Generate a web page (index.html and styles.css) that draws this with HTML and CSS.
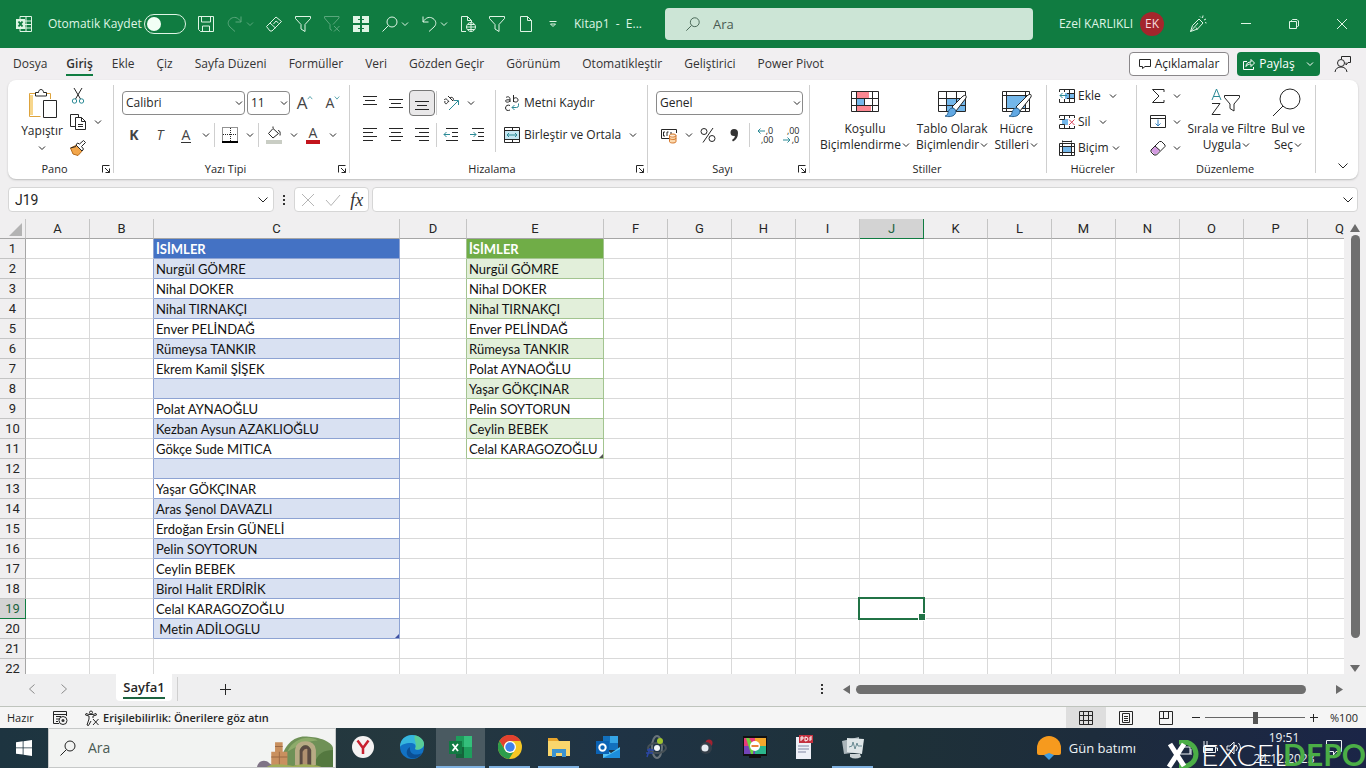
FILE: index.html
```html
<!DOCTYPE html>
<html lang="tr">
<head>
<meta charset="utf-8">
<title>Kitap1 - Excel</title>
<link rel="stylesheet" href="styles.css">
</head>
<body>
<svg class="sprite" aria-hidden="true">
  <symbol id="caret" viewBox="0 0 8 8"><path d="M1 2.500 4 5.500l3-3"/></symbol>
  <symbol id="chev" viewBox="0 0 12 12"><path d="M1.500 3.500 6 8l4.500-4.500"/></symbol>
  <symbol id="launch" viewBox="0 0 10 10"><path d="M1.500 8.500v-7h7M4 4l4.500 4.500M8.500 4.500v4h-4"/></symbol>
  <symbol id="search" viewBox="0 0 18 18"><circle cx="11" cy="7" r="5"/><path d="M7.300 10.700 1.500 16.500"/></symbol>
  <symbol id="funnel" viewBox="0 0 18 18"><path d="M1.500 1.500h15v2L11 9.500v7l-4-2.500V9.500L1.500 3.500z"/></symbol>
  <symbol id="funnelx" viewBox="0 0 18 18"><path d="M10 9.500 16 3V1.500H1.500V3l5.500 6.500V14l2 1.500M11 11l5.500 5.500M16.500 11 11 16.500"/></symbol>
  <symbol id="page" viewBox="0 0 18 18"><path d="M3.500 1.500h7l4 4v11h-11zM10.500 1.500v4h4"/></symbol>
</svg>

<header class="titlebar">
  <svg class="i18 logo" viewBox="0 0 18 18"><path d="M5 4.500V1.500h11.500v15H5v-3M5 6h11.500M10 9.500h6.500M10 13h6.500M11 1.500v15"/><rect class="solid" x="1" y="4" width="9" height="10"/><path class="mark" d="m3.500 6.500 4 5m0-5-4 5"/></svg>
  <label class="autosave"><span>Otomatik Kaydet</span><input type="checkbox" class="toggle"></label>
  <div class="quick">
    <button aria-label="Kaydet"><svg class="i18" viewBox="0 0 18 18"><path d="M1.500 1.500h15v15h-13l-2-2zM4.500 1.500V7h9V1.500M5.500 16.500V11h7v5.500"/></svg></button>
    <button class="pair dim" aria-label="Yinele"><svg class="i18" viewBox="0 0 18 18"><path d="M15 1.500V7h-5.500M15 7C12 2 8 1.500 5 3.500S1 9 4 12l5 4.500"/></svg><svg class="i8"><use href="#caret"/></svg></button>
    <button aria-label="Temizle"><svg class="i18" viewBox="0 0 18 18"><path d="M1.500 11.500 11 2l5.500 4.500L7 16H5zM5 8l5.500 5M8.500 9l2.500-3 2.500 2"/></svg></button>
    <button aria-label="Filtre"><svg class="i18"><use href="#funnel"/></svg></button>
    <button class="dim" aria-label="Filtreyi temizle"><svg class="i18"><use href="#funnelx"/></svg></button>
    <button aria-label="Pencereler"><svg class="i18" viewBox="0 0 18 18"><path class="solid" d="M1 1h7v3H6v1h2v3H1zm9 0h7v7h-7V5h2V4h-2zM1 10h7v3H6v1h2v3H1zm9 0h7v7h-7v-3h2v-1h-2z"/></svg></button>
    <button class="pair" aria-label="Bul"><svg class="i18"><use href="#search"/></svg><svg class="i8"><use href="#caret"/></svg></button>
    <button class="pair" aria-label="Geri al"><svg class="i18" viewBox="0 0 18 18"><path d="M3 1.500V7h5.500M3 7c3-5 7-5.500 10-3.500S17 9 14 12l-5 4.500"/></svg><svg class="i8"><use href="#caret"/></svg></button>
    <button aria-label="Web sayfası"><svg class="i18" viewBox="0 0 18 18"><path d="M7 16.500H2.500v-15h6l4 4V7M8.500 1.500v4h4"/><circle cx="12" cy="12" r="4.500"/><path d="M7.500 12h9M12 7.500v9M9 9.500h6M9 14.500h6"/></svg></button>
    <button aria-label="Filtre uygula"><svg class="i18"><use href="#funnel"/></svg></button>
    <button aria-label="Yeni"><svg class="i18"><use href="#page"/></svg></button>
    <button class="narrow" aria-label="Özelleştir"><svg class="i8" viewBox="0 0 8 8"><path d="M.5 1.500h7M1.500 4 4 6.500 6.500 4z"/></svg></button>
  </div>
  <span class="doc">Kitap1&nbsp; -&nbsp; E...</span>
  <label class="find"><svg class="i16"><use href="#search"/></svg><input type="text" placeholder="Ara" aria-label="Ara"></label>
  <div class="user"><span>Ezel KARLIKLI</span><span class="avatar">EK</span></div>
  <div class="win">
    <button aria-label="Kalem"><svg class="i18" viewBox="0 0 18 18"><path d="m1.500 16.500 2-6 6.500-6.500 4 4-5.500 6zM1.500 16.500 9 8M8.500 14.500 7 12.500M11 1.500l1 1M14 .5l-.5 2.500M17 4l-2 1M17.500 8l-1.500-.5"/></svg></button>
    <button aria-label="Simge durumuna küçült"><svg class="i12" viewBox="0 0 12 12"><path d="M1 5.500h10"/></svg></button>
    <button aria-label="Geri yükle"><svg class="i12" viewBox="0 0 12 12"><path d="M1.500 3.500h7v7h-7zM3.500 3.500v-1l1-1H9L10.500 3v5l-1 .5h-1"/></svg></button>
    <button aria-label="Kapat"><svg class="i12" viewBox="0 0 12 12"><path d="m1 1 10 10M11 1 1 11"/></svg></button>
  </div>
</header>

<nav class="tabs">
  <a href="#">Dosya</a><a href="#" class="on">Giriş</a><a href="#">Ekle</a><a href="#">Çiz</a><a href="#">Sayfa Düzeni</a><a href="#">Formüller</a><a href="#">Veri</a><a href="#">Gözden Geçir</a><a href="#">Görünüm</a><a href="#">Otomatikleştir</a><a href="#">Geliştirici</a><a href="#">Power Pivot</a>
  <div class="actions">
    <button class="comments"><svg class="i12" viewBox="0 0 12 12"><path d="M.5 1.500h11v7H6l-2.500 2v-2h-3z"/></svg>Açıklamalar</button>
    <button class="share"><svg class="i12" viewBox="0 0 12 12"><path d="M4 3.500H.5v8h10V9M3 8.500C3 5.500 5 4 8 4V1.500L11.500 5 8 8.500V6C6 6 4 6.500 3 8.500z"/></svg>Paylaş<svg class="i8"><use href="#caret"/></svg></button>
    <button class="plain" aria-label="Kişiler"><svg class="i18" viewBox="0 0 18 18"><circle cx="7" cy="8" r="3.500"/><path d="M1 17c.5-3.500 3-5 6-5s5.500 1.500 6 5M7.500 4V1.500h9v6H14L12 10V7.500"/></svg></button>
  </div>
</nav>

<main class="ribbon">
  <section class="group g-clip">
    <div class="body tight">
      <button class="paste"><svg class="i32" viewBox="0 0 32 32"><path class="goldfill" d="M4 7h3v20H4z"/><path class="gold" d="M9 5.500H3.500v23h11M21 5.500h3.500V11"/><path class="paper" d="M9.500 8V4.500h3c0-4 5-4 5 0h3V8zM17.500 12.500h13v17h-13z"/></svg><span>Yapıştır</span><svg class="i8"><use href="#caret"/></svg></button>
      <div class="stack">
        <button class="ib" aria-label="Kes"><svg class="i18" viewBox="0 0 18 18"><path d="m5 1 6.500 11M13 1 6.500 12"/><circle class="teal" cx="5.500" cy="14" r="2.200"/><circle class="teal" cx="12.500" cy="14" r="2.200"/></svg></button>
        <div class="row"><button class="ib" aria-label="Kopyala"><svg class="i18" viewBox="0 0 18 18"><path d="M6 13.500H1.500v-12h8V4M6.500 4.500h6l4 4v8h-10zM12.500 4.500v4h4M9 11.500h5M9 13.500h5"/></svg></button><button class="cb" aria-label="Kopyalama seçenekleri"><svg class="i8"><use href="#caret"/></svg></button></div>
        <button class="ib" aria-label="Biçim boyacısı"><svg class="i18" viewBox="0 0 18 18"><path class="orange" d="M1.500 9 4 15l5 1.500L14 11 9 5.500z"/><path class="paper" d="m7 6 6 6 1.500-2-2-2.500 4-4-2-2-4 3.500L8.500 4zM1.500 9 7 7.500"/></svg></button>
      </div>
    </div>
    <footer><span>Pano</span><button aria-label="Pano seçenekleri"><svg class="i10"><use href="#launch"/></svg></button></footer>
  </section>

  <section class="group g-font">
    <div class="body lines">
      <div class="row two">
        <span class="combo c-font"><select aria-label="Yazı tipi"><option>Calibri</option></select><svg class="i8"><use href="#caret"/></svg></span>
        <span class="combo c-size"><select aria-label="Boyut"><option>11</option></select><svg class="i8"><use href="#caret"/></svg></span>
        <button class="ib glyph big" aria-label="Büyüt">A<svg class="i6 teal" viewBox="0 0 8 8"><path d="M1 5.500 4 2l3 3.500"/></svg></button>
        <button class="ib glyph" aria-label="Küçült">A<svg class="i6 teal" viewBox="0 0 8 8"><path d="M1 2l3 3.500L7 2"/></svg></button>
      </div>
      <div class="row pull">
        <button class="ib glyph bold">K</button><button class="ib glyph ital">T</button><button class="ib glyph under"><span>A</span></button><button class="cb" aria-label="Altı çizili"><svg class="i8"><use href="#caret"/></svg></button>
        <i class="sep"></i>
        <button class="ib" aria-label="Kenarlıklar"><svg class="i16" viewBox="0 0 16 16"><path class="dots" d="M.5 13.500V.5h15v13M8.500 1v13M1 7.500h14"/><path class="thick" d="M0 15h16"/></svg></button><button class="cb" aria-label="Kenarlık türü"><svg class="i8"><use href="#caret"/></svg></button>
        <i class="sep"></i>
        <button class="ib" aria-label="Dolgu"><svg class="i18" viewBox="0 0 18 18"><path d="m8 2.500 5.500 5L8 12 3.500 7.500zM8 2V.5M13 4.500c2 0 2.500 2 2 5"/><path class="greybar" d="M1 14h16v4H1z"/></svg></button><button class="cb" aria-label="Dolgu rengi"><svg class="i8"><use href="#caret"/></svg></button>
        <button class="ib glyph fc"><span>A</span></button><button class="cb" aria-label="Yazı rengi"><svg class="i8"><use href="#caret"/></svg></button>
      </div>
    </div>
    <footer><span>Yazı Tipi</span><button aria-label="Yazı tipi seçenekleri"><svg class="i10"><use href="#launch"/></svg></button></footer>
  </section>

  <section class="group g-align">
    <div class="body">
      <div class="lines">
        <div class="row">
          <button class="ib" aria-label="Üste hizala"><svg class="i16" viewBox="0 0 16 16"><path d="M1 1.500h14M3 5.500h10M1 9.500h14"/></svg></button>
          <button class="ib" aria-label="Ortaya hizala"><svg class="i16" viewBox="0 0 16 16"><path d="M1 4.500h14M3 8.500h10M1 12.500h14"/></svg></button>
          <button class="ib pressed" aria-label="Alta hizala"><svg class="i16" viewBox="0 0 16 16"><path d="M1 6.500h14M3 10.500h10M1 14.500h14"/></svg></button>
          <i class="sep slim"></i>
          <button class="ib" aria-label="Yönlendirme"><svg class="i18" viewBox="0 0 18 18"><path d="M2 6c2-2 3-1 5 2M3 7c-1 3 2 4 3 .5M6 2l5 5M8 4c2-2 5 1 2.500 3"/><path class="teal" d="m7 16 9-9M12 6.500h4.500V11"/></svg></button><button class="cb" aria-label="Yön türü"><svg class="i8"><use href="#caret"/></svg></button>
        </div>
        <div class="row">
          <button class="ib" aria-label="Sola hizala"><svg class="i16" viewBox="0 0 16 16"><path d="M1 1.500h14M1 5.500h10M1 9.500h14M1 13.500h10"/></svg></button>
          <button class="ib" aria-label="Ortala"><svg class="i16" viewBox="0 0 16 16"><path d="M1 1.500h14M3 5.500h10M1 9.500h14M3 13.500h10"/></svg></button>
          <button class="ib" aria-label="Sağa hizala"><svg class="i16" viewBox="0 0 16 16"><path d="M1 1.500h14M5 5.500h10M1 9.500h14M5 13.500h10"/></svg></button>
          <i class="sep slim"></i>
          <button class="ib" aria-label="Girintiyi azalt"><svg class="i16" viewBox="0 0 16 16"><path d="M3 1.500h12M9 5.500h6M9 9.500h6M3 13.500h12"/><path class="teal" d="M7 7.500H1M3.500 5 1 7.500 3.500 10"/></svg></button>
          <button class="ib" aria-label="Girintiyi artır"><svg class="i16" viewBox="0 0 16 16"><path d="M3 1.500h12M9 5.500h6M9 9.500h6M3 13.500h12"/><path class="teal" d="M1 7.500h6M4.500 5 7 7.500 4.500 10"/></svg></button>
        </div>
      </div>
      <i class="sep tall"></i>
      <div class="lines">
        <button class="tb"><svg class="i18 wrap" viewBox="0 0 18 18"><path d="M3 3.500c2-1.500 4-.5 4 1.500v3M7 6C4 5.500 2.500 6 2.500 7S5 9 7 7M10.500 1v7M10.500 5c1-2 4.500-1.500 4.500 1s-3.500 2.500-4.500 1M7 11.500c-2-1-4.500 0-4.500 2.500S5 17 7 16"/><path class="teal" d="M15.500 9.500v2q0 2-2 2H9M11.500 11 9 13.500l2.500 2.500"/></svg>Metni Kaydır</button>
        <button class="tb"><svg class="i18" viewBox="0 0 18 18"><path class="sky" d="M2 5h14v8H2z"/><path d="M1.500 1.500h15v15h-15zM1.500 4.500h15M1.500 13.500h15M9.500 1.500v3M9.500 13.500v3"/><path class="teal" d="M4 9h10M6 7 4 9l2 2M12 7l2 2-2 2"/></svg>Birleştir ve Ortala<svg class="i8 far"><use href="#caret"/></svg></button>
      </div>
    </div>
    <footer><span>Hizalama</span><button aria-label="Hizalama seçenekleri"><svg class="i10"><use href="#launch"/></svg></button></footer>
  </section>

  <section class="group g-num">
    <div class="body lines">
      <span class="combo c-num"><select aria-label="Sayı biçimi"><option>Genel</option></select><svg class="i8"><use href="#caret"/></svg></span>
      <div class="row">
        <button class="ib" aria-label="Para birimi"><svg class="i18" viewBox="0 0 18 18"><path d="M9 12.500H1.500v-9h15V7M5 6H3.500v4H5M8.500 6H7v4M11 6v2"/><path class="coin" d="M9.500 9.500v6c0 2 6.500 2 6.500 0v-6M9.500 9.500c0-2 6.500-2 6.500 0s-6.500 2-6.500 0M9.500 12c0 2 6.500 2 6.500 0"/></svg></button><button class="cb" aria-label="Para birimi türü"><svg class="i8"><use href="#caret"/></svg></button>
        <button class="ib" aria-label="Yüzde"><svg class="i18" viewBox="0 0 18 18"><circle cx="5" cy="5.500" r="3"/><circle cx="13" cy="12.500" r="3"/><path d="M14 2 4 16.500"/></svg></button>
        <button class="ib" aria-label="Binlik ayırıcı"><svg class="i16" viewBox="0 0 16 16"><path class="dark" d="M8 2a3.500 3.500 0 0 0 0 7q1 0 1-.3Q9 11 6 13l1 1.500Q12 12 12 6 12 2 8 2z"/></svg></button>
        <i class="sep"></i>
        <button class="ib dec"><svg class="i8 teal" viewBox="0 0 8 8"><path d="M8 4H1M3.500 1.500 1 4l2.500 2.500"/></svg><span>,0</span><span class="span">,00</span></button>
        <button class="ib dec"><span class="span">,00</span><svg class="i8 teal" viewBox="0 0 8 8"><path d="M0 4h7M4.500 1.500 7 4 4.500 6.500"/></svg><span>,0</span></button>
      </div>
    </div>
    <footer><span>Sayı</span><button aria-label="Sayı seçenekleri"><svg class="i10"><use href="#launch"/></svg></button></footer>
  </section>

  <section class="group g-style">
    <div class="body tight larges">
      <button class="lb"><svg class="i32" viewBox="0 0 32 32"><path class="red" d="M7 4h13v7H7zM7 18h15v7H7z"/><path class="blue" d="M7 11h8v7H7z"/><path d="M2.500 4.500h27v20h-27zM2.500 11.500h27M2.500 18.500h27M7.500 4.500v20M23.500 4.500v20M15.500 11v7"/></svg><span>Koşullu</span><span>Biçimlendirme<svg class="i8"><use href="#caret"/></svg></span></button>
      <button class="lb"><svg class="i32" viewBox="0 0 32 32"><path class="blue" d="M11 11h18v13H11z"/><path d="M2.500 4.500h27v20h-27zM2.500 11.500h27M2.500 18.500h27M10.500 4.500v20M20.500 4.500v20"/><path class="paper" d="M16 20 27 9q4-2 3 2L20 24z"/><path class="brush" d="M9 29c4 0 2-7 7-8 3 0 5 3 3 6s-7 3-10 2z"/></svg><span>Tablo Olarak</span><span>Biçimlendir<svg class="i8"><use href="#caret"/></svg></span></button>
      <button class="lb"><svg class="i32" viewBox="0 0 32 32"><path class="blue" d="M7 9h18v12H7z"/><path d="M2.500 4.500h27v20h-27zM2.500 8.500h27M2.500 21.500h27M6.500 4.500v20M25.500 4.500v20"/><path class="paper" d="M16 20 28 8q4-2 3 2L20 24z"/><path class="brush" d="M9 29c4 0 2-7 7-8 3 0 5 3 3 6s-7 3-10 2z"/></svg><span>Hücre</span><span>Stilleri<svg class="i8"><use href="#caret"/></svg></span></button>
    </div>
    <footer><span>Stiller</span></footer>
  </section>

  <section class="group g-cells">
    <div class="body tight stack">
      <button class="tb"><svg class="i16" viewBox="0 0 16 16"><path class="blue" d="M6 5h10v6H6z"/><path d="M5 1.500h10.500v13H.5V11M.5 4V1.500H5M5.500 1.500V4M5.500 11v3.500M10.500 1.500v13M8 5.500h7.500M8 10.500h7.500"/><path class="teal" d="M8 7.500H1M3.500 5 1 7.500 3.500 10"/></svg>Ekle<svg class="i8 far"><use href="#caret"/></svg></button>
      <button class="tb"><svg class="i16" viewBox="0 0 16 16"><path class="blue" d="M3 5h6v6H3z"/><path d="M.5 4V1.500h15V4M5.500 1.500v4M.5 5.500h5M.5 10.500h5v4M.5 11v3.500h15V12M10.500 1.500V4M10.500 12v2.500"/><path class="redline" d="m10 5.500 5.500 5.500M15.500 5.500 10 11"/></svg>Sil<svg class="i8 far"><use href="#caret"/></svg></button>
      <button class="tb"><svg class="i16" viewBox="0 0 16 16"><path class="blue" d="M4 7h8v5H4z"/><path d="M.5 3.500h15v12H.5zM.5 6.500h15M.5 12.500h15M3.500 3.500v12M12.500 3.500v12M3.500.5v2M12.500.5v2M4 1.500h8"/></svg>Biçim<svg class="i8"><use href="#caret"/></svg></button>
    </div>
    <footer><span>Hücreler</span></footer>
  </section>

  <section class="group g-edit">
    <div class="body tight">
      <div class="stack">
        <div class="row"><button class="ib" aria-label="Otomatik toplam"><svg class="i16" viewBox="0 0 16 16"><path d="M14 4V1.500H2.500L9 8l-6.500 6.500H14V12"/></svg></button><button class="cb" aria-label="Toplam türü"><svg class="i8"><use href="#caret"/></svg></button></div>
        <div class="row"><button class="ib" aria-label="Doldur"><svg class="i16" viewBox="0 0 16 16"><path d="M.5 1.500h15v12H.5zM.5 4.500h15"/><path class="azure" d="M8 5.500V12M5.500 9.500 8 12l2.500-2.500"/></svg></button><button class="cb" aria-label="Doldurma türü"><svg class="i8"><use href="#caret"/></svg></button></div>
        <div class="row"><button class="ib" aria-label="Temizle"><svg class="i16" viewBox="0 0 16 16"><path class="violet" d="m1 10 4-4 5 4.500-4 4H4z"/><path d="m1 10 8.500-8.500h2L15 5v1.500L6.500 15H4L1 12zM5 6l5 4.500"/></svg></button><button class="cb" aria-label="Temizleme türü"><svg class="i8"><use href="#caret"/></svg></button></div>
      </div>
      <button class="lb"><svg class="i32" viewBox="0 0 32 32"><path class="teal" d="m1 13 4.500-11L10 13M2.500 9.500h6"/><path d="M1 16.500h8L1 27.500h8.500M13.500 8.500h15v2L23 17v7l-4-2.500V17l-5.500-6.500z"/></svg><span>Sırala ve Filtre</span><span>Uygula<svg class="i8"><use href="#caret"/></svg></span></button>
      <button class="lb"><svg class="i32" viewBox="0 0 32 32"><circle cx="18" cy="12" r="10"/><path d="M11 19 1 29"/></svg><span>Bul ve</span><span>Seç<svg class="i8"><use href="#caret"/></svg></span></button>
    </div>
    <footer><span>Düzenleme</span></footer>
  </section>
  <button class="collapse" aria-label="Şeridi daralt"><svg class="i12"><use href="#chev"/></svg></button>
</main>

<div class="formula">
  <span class="namebox"><input type="text" value="J19" aria-label="Ad kutusu"><svg class="i12"><use href="#chev"/></svg></span>
  <svg class="dots3" viewBox="0 0 4 12"><path d="M1 1h2v2H1zM1 5h2v2H1zM1 9h2v2H1z"/></svg>
  <div class="fxbox">
    <button class="off" aria-label="İptal"><svg class="i16" viewBox="0 0 16 16"><path d="m2 2 12 12M14 2 2 14"/></svg></button>
    <button class="off" aria-label="Gir"><svg class="i16" viewBox="0 0 16 16"><path d="m1 8 5 5.500L15 3"/></svg></button>
    <button class="fx">fx</button>
  </div>
  <label class="bar"><input type="text" aria-label="Formül çubuğu"><svg class="i12"><use href="#chev"/></svg></label>
</div>

<div class="sheet">
  <div class="pane"><table class="grid" id="grid"></table></div>
  <div class="vscroll">
    <svg class="i10" viewBox="0 0 10 10"><path d="M0 9 5 1l5 8z"/></svg>
    <i class="thumb"></i>
    <svg class="i10" viewBox="0 0 10 10"><path d="M0 2h10L5 9z"/></svg>
  </div>
</div>

<div class="sheettabs">
  <button class="step" aria-label="Önceki"><svg class="i12" viewBox="0 0 12 12"><path d="M8.500 1.500 3.500 6l5 4.500"/></svg></button>
  <button class="step" aria-label="Sonraki"><svg class="i12" viewBox="0 0 12 12"><path d="m3.500 1.500 5 4.500-5 4.500"/></svg></button>
  <button class="sheettab"><span>Sayfa1</span></button>
  <i class="sep"></i>
  <button class="add" aria-label="Yeni sayfa"><svg class="i12" viewBox="0 0 12 12"><path d="M6.500 1v11M1 6.500h11"/></svg></button>
  <div class="hscroll">
    <svg class="dots3" viewBox="0 0 4 12"><path d="M1 1h2v2H1zM1 5h2v2H1zM1 9h2v2H1z"/></svg>
    <svg class="i10 arr" viewBox="0 0 10 10"><path d="M8 1v9L1 5.500z"/></svg>
    <i class="thumb"></i>
    <svg class="i10 arr" viewBox="0 0 10 10"><path d="M2 1v9l7-4.500z"/></svg>
  </div>
</div>

<div class="status">
  <span class="ready">Hazır</span>
  <svg class="i16" viewBox="0 0 16 16"><path d="M7 13.500H1.500v-12h13V6M1.500 4.500h13M4 6.500h5M4 9h3M4 11.500h2"/><circle cx="11" cy="10.500" r="4"/><circle class="dark" cx="11" cy="10.500" r="1.500"/></svg>
  <button class="access"><svg class="i16" viewBox="0 0 16 16"><circle cx="7" cy="2.500" r="1.500"/><path d="M1.500 5 5 6v3l-2 6 1.500.5L7 11M12.500 5 9 6v2M1.500 5l.5-1.500 3 1h4l3-1 .5 1.500M9 9l5.500 6M14.500 9 9 15"/></svg>Erişilebilirlik: Önerilere göz atın</button>
  <div class="views">
    <button class="on" aria-label="Normal"><svg class="i14" viewBox="0 0 14 14"><path d="M.5.5h13v13H.5zM4.500.5v13M9.500.5v13M.5 4.500h13M.5 9.500h13"/></svg></button>
    <button aria-label="Sayfa düzeni"><svg class="i14" viewBox="0 0 14 14"><path d="M.5.5h13v13H.5zM3.500 2.500h7v9h-7zM5 5.500h4M5 7.500h4M5 9.500h4"/></svg></button>
    <button aria-label="Sayfa sonu önizleme"><svg class="i14" viewBox="0 0 14 14"><path d="M.5.5h13v13H.5zM4.500.5v7h5v-7M.5 7.500h9"/></svg></button>
  </div>
  <button class="zb" aria-label="Uzaklaştır"><svg class="i8" viewBox="0 0 8 8"><path d="M0 3.500h8"/></svg></button>
  <input type="range" class="zoom" min="10" max="190" value="100" aria-label="Yakınlaştırma">
  <button class="zb" aria-label="Yakınlaştır"><svg class="i8" viewBox="0 0 8 8"><path d="M0 3.500h8M3.500 0v8"/></svg></button>
  <span class="pct">%100</span>
</div>

<footer class="taskbar">
  <button class="start" aria-label="Başlat"><svg class="i16" viewBox="0 0 16 16"><path class="solid" d="M0 2.300 6.700 1.300v6.200H0zM7.500 1.200 16 0v7.500H7.500zM0 8.300h6.700v6.300L0 13.700zM7.500 8.300H16V16l-8.500-1.200z"/></svg></button>
  <label class="tsearch"><svg class="i18"><use href="#search"/></svg><input type="text" placeholder="Ara" aria-label="Windows araması">
    <svg class="scene" viewBox="0 0 80 40"><path fill="#6f9157" d="M24 40C26 18 38 8 50 8s28 4 30 12v20z"/><path fill="#8cab6a" d="M32 24c6-14 22-18 32-12-8 0-20 4-32 12z"/><path fill="#54783f" d="M60 40c2-14 10-18 20-18v18z"/><path fill="#b8ab85" d="M40 38V22q1-9 11-9t11 9v16h-5V22q-2-5-6-5t-6 5v16z"/><path fill="#5b4a42" d="M45 38V22q2-5 6-5t6 5v16z"/><path fill="#b09070" d="M48 38V24q2-4 5-3v17z"/><path fill="#c9905f" d="M19 14h8v10h5v14H15V24h4z"/><path fill="#9b6844" d="M19 18h8v1h-8zM15 29h17v1H15zM23 24h1v14h-1z"/><path fill="#7f7386" d="M0 40c1-6 8-9 13-4l6 4z"/><path fill="#a0ad5a" d="M10 40c8-5 22-2 28-1 8-3 22-2 30 1z"/></svg>
  </label>
  <div class="apps">
    <button aria-label="Yandex"><svg class="i24" viewBox="0 0 24 24"><circle cx="12" cy="12" r="11" fill="#f4f2f2"/><path d="m6.500 5.500 5.500 7.500v6m0-6 5.500-7.500" stroke="#c8202f" stroke-width="2.500"/></svg></button>
    <button aria-label="Edge"><svg class="i24" viewBox="0 0 24 24"><circle cx="12" cy="12" r="12" fill="#1272c4"/><path fill="#36b6dd" d="M0 12C0 4 6 0 12 0s12 4 12 9c0 5-7 7-9 5 2-4-1-6-4-6C5 8 1 10 0 12z"/><path fill="#62d286" d="M14 0c6 1 10 5 10 9s-6 7-9 5c3-5-2-9 0-14z" opacity=".8"/><path fill="#0b4f94" d="M10 12c-1 6 4 10 12 6-3 5-8 6-11 5-5-1-6-8-1-11z"/></svg></button>
    <button class="cur" aria-label="Excel"><svg class="i24" viewBox="0 0 24 24"><path fill="#1e9e5c" d="M7 1h16v22H7z"/><path fill="#34bf7b" d="M15 1h8v11h-8z"/><path fill="#15653b" d="M7 12h8v11H7z"/><path fill="#127a43" d="M0 6h13v13H0z"/><path d="m3.500 9 5.500 7m0-7-5.500 7" stroke="#fff" stroke-width="1.800"/></svg></button>
    <button class="open" aria-label="Chrome"><svg class="i24" viewBox="0 0 24 24"><circle cx="12" cy="12" r="12" fill="#f5c624"/><path fill="#e2412f" d="M1.500 6A12 12 0 0 1 22.500 6H12a6 6 0 0 0-5.500 8z"/><path fill="#2d9c4b" d="M1.500 6A12 12 0 0 0 11 24l5.500-8.500C14 19 9 18 7 15z"/><circle cx="12" cy="12" r="6" fill="#fff"/><circle cx="12" cy="12" r="4.700" fill="#4081ec"/></svg></button>
    <button class="open" aria-label="Dosya Gezgini"><svg class="i24" viewBox="0 0 24 24"><path fill="#e8a52c" d="M1 3h9l2 3h11v6H1z"/><path fill="#f9d66c" d="M1 6h22v15H1z"/><path fill="#3b93cf" d="M5 14h14v8h-4v-4H9v4H5z"/></svg></button>
    <button aria-label="Outlook"><svg class="i24" viewBox="0 0 24 24"><path fill="#1270bd" d="M7 1h15v14H7z"/><path fill="#35a5e6" d="M14 1h8v7h-8z"/><path fill="#52c1f3" d="M7 12l8 6 9-6v11H7z"/><path fill="#1d8ddb" d="M7 23l17-9v9z"/><path fill="#0b62b4" d="M0 6h13v13H0z"/><circle cx="6.500" cy="12.500" r="3.200" stroke="#fff" stroke-width="2"/></svg></button>
    <button aria-label="Atom"><svg class="i24" viewBox="0 0 24 24"><ellipse cx="12" cy="12" rx="5" ry="11" stroke="#69737a" stroke-width="2"/><ellipse cx="12" cy="13" rx="9" ry="5" stroke="#465056" stroke-width="2"/><path d="M2 15h7M1 18h7M5 13l-3 9" stroke="#2b47a5" stroke-width="1.500"/><circle cx="12" cy="13" r="3" fill="#f6f8fb"/><circle cx="15" cy="6" r="3" fill="#9fc32e"/></svg></button>
    <button aria-label="Kayıt"><svg class="i24" viewBox="0 0 24 24"><circle cx="15" cy="8" r="3.500" fill="#a32130"/><circle cx="12" cy="13" r="6" fill="#353f49"/><circle cx="11" cy="13" r="3.500" fill="#e8ecf2"/></svg></button>
    <button aria-label="Televizyon"><svg class="i24" viewBox="0 0 24 24"><path fill="#111" d="M0 1h24v20H0zM6 21h12v2H6z"/><path fill="#e83a7b" d="M1 3h11v8H1z"/><path fill="#f3a82c" d="M12 3h11v8H12z"/><path fill="#7444b8" d="M1 11h11v8H1z"/><path fill="#2bb58c" d="M12 11h11v8H12z"/><path fill="#6ed33f" d="M3 3h3l5 8-1 8H8z"/><circle cx="12" cy="11" r="5" fill="#fff"/><path d="M8.500 11h7" stroke="#e9823a" stroke-width="2"/></svg></button>
    <button aria-label="PDF"><svg class="i24" viewBox="0 0 24 24"><path fill="#eef0f7" d="M4 2h15v22H4z"/><path fill="#c4313f" d="M7 0h14v8H7z"/><path d="M9 6V2h2v2H9m4 2V2q3 0 3 2t-3 2m5 0V2h2m-2 2h2" stroke="#fff"/><path d="M6 11h11M6 14h11M6 17h8" stroke="#8288a4"/></svg></button>
    <button class="open" aria-label="Görev Yöneticisi"><svg class="i24" viewBox="0 0 24 24"><path fill="#aab5ba" d="m1 6 17-4v15L3 19z"/><path fill="#dfe6e8" d="m6 3 17 1-2 15-15-2z"/><path d="m8 12 3-1 1-4 2 7 2-6 1 3h4" stroke="#6a8b93"/><path fill="#c9d1d4" d="M9 19h10l1 3q-6 3-11 0z"/></svg></button>
  </div>
  <div class="weather"><svg class="i24" viewBox="0 0 24 24"><path fill="#f69a1e" d="M0 12a12 12 0 0 1 24 0v5q0 2-2 2H2q-2 0-2-2z"/><path fill="#3f9be0" d="m7 19 5-2 5 2-5 5z"/></svg><span>Gün batımı</span></div>
  <div class="tray">
    <svg class="i16" viewBox="0 0 16 16"><path d="M3 4.500Q8 0 13 4.500M2 7h10v7H2zM13 9v6"/></svg>
    <svg class="i16" viewBox="0 0 16 16"><path d="M1.500 6.500h12v6h-12zM13.500 8h2v3M2 1v5M5 1v5"/><path class="solid" d="M3 8h8v3H3z"/></svg>
    <svg class="i16" viewBox="0 0 16 16"><path d="M1 6h3l4-4v12l-4-4H1zM10 5q3 3 0 6M12.500 3q4 5 0 10"/></svg>
    <div class="clock"><span>19:51</span><span>24.12.2023</span></div>
    <svg class="i16" viewBox="0 0 16 16"><path d="M.5.5h15v11H10L7.500 15v-3.500h-7z"/></svg>
  </div>
  <div class="wm"><svg class="wmx" viewBox="0 0 34 28"><path d="M12 2h5a12 12 0 0 1 0 24h-5" stroke="#4bae46" stroke-width="5"/><path d="m3 4 14 22M17 4 2 27" stroke="#fff" stroke-width="5"/></svg><span class="w1">EXCEL</span><span class="w2">DEPO</span></div>
</footer>
<script src="script.js"></script>
</body>
</html>
```
FILE: styles.css
```css
* { box-sizing: border-box; }
body { margin: 0; height: 100vh; display: flex; flex-direction: column; overflow: hidden; background: #f0eff0; color: #262626; font: 12px/16px "Open Sans", "Noto Sans", sans-serif; }
button, input, select { font: inherit; color: inherit; }
button { border: 0; background: none; padding: 0; display: flex; align-items: center; justify-content: center; }
svg { fill: none; stroke: currentColor; flex: none; }
.sprite { position: absolute; width: 0; height: 0; }
.i6 { width: 6px; height: 6px; }
.i8 { width: 8px; height: 8px; }
.i10 { width: 10px; height: 10px; }
.i12 { width: 12px; height: 12px; }
.i14 { width: 14px; height: 14px; }
.i16 { width: 16px; height: 16px; }
.i18 { width: 18px; height: 18px; }
.i24 { width: 24px; height: 24px; }
.i32 { width: 32px; height: 32px; }
.teal { stroke: #2b8a96; }
.azure { stroke: #2f7fc0; }
.redline { stroke: #d9445a; }
.solid { fill: currentColor; stroke: none; }
.dark { fill: #333; stroke: none; }
.blue { fill: #74b7ea; stroke: none; }
.red { fill: #fb8791; stroke: none; }
.sky { fill: #c5e6f2; stroke: none; }
.violet { fill: #d39be0; stroke: none; }
.greybar { fill: #c9cdc4; stroke: none; }
.paper { fill: #fff; }
.brush { fill: #62a9e4; stroke: #2b6390; }
.gold { stroke: #dda33c; }
.goldfill { fill: #f7d68c; stroke: none; }
.orange { fill: #f3a64a; stroke: #b56b1c; }
.coin { fill: #fbd9ae; stroke: #d5762a; }
.dots { stroke-dasharray: 1 1; }
.thick { stroke-width: 2; stroke: #000; }

.titlebar { height: 48px; flex: none; display: flex; align-items: center; background: #107c41; color: #dff5e5; padding-left: 15px; }
.logo .mark { stroke: #107c41; stroke-width: 2; }
.autosave { display: flex; align-items: center; gap: 2px; margin-left: 15px; white-space: nowrap; }
.autosave span { width: 94px; }
.toggle { appearance: none; margin: 0; width: 42px; height: 20px; border: 1px solid #dff5e5; border-radius: 10px; display: flex; align-items: center; padding: 2px; }
.toggle::before { content: ""; width: 14px; height: 14px; border-radius: 7px; background: #f2fff5; }
.quick { display: flex; margin-left: 5px; }
.quick button { width: 29px; height: 30px; }
.quick .pair { width: 39px; gap: 2px; }
.quick .narrow { width: 25px; }
.quick .dim { color: #5aa77c; }
.doc { margin-left: 9px; white-space: nowrap; width: 76px; }
.find { flex: 1; display: flex; align-items: center; gap: 12px; height: 32px; margin-left: 15px; padding-left: 20px; border-radius: 4px; background: #cce5d6; color: #3c5b4a; }
.find input, .tsearch input, .bar input, .namebox input { border: 0; background: none; outline: 0; padding: 0; min-width: 0; flex: 1; }
.find input { font-size: 13px; }
input::placeholder { color: #4a5a52; opacity: 1; }
.user { display: flex; align-items: center; gap: 7px; margin-left: 26px; white-space: nowrap; }
.avatar { width: 24px; height: 24px; line-height: 24px; border-radius: 50%; background: #a4262c; text-align: center; color: #f6dcdc; }
.win { display: flex; margin-left: 10px; }
.win button { width: 48px; height: 48px; }

.tabs { height: 32px; flex: none; display: flex; align-items: center; gap: 22px; padding-left: 13px; background: #f1eff1; font-size: 12px; }
.tabs a { color: #333; text-decoration: none; white-space: nowrap; line-height: 20px; padding-top: 2px; border-bottom: 2px solid transparent; }
.tabs .on { font-weight: 600; border-color: #107c41; margin: 0 -3px; }
.actions { display: flex; align-items: center; gap: 8px; margin-left: auto; padding-right: 14px; }
.actions button { height: 24px; gap: 4px; border-radius: 4px; }
.comments { width: 100px; border: 1px solid #8a878a; background: #fff; }
.actions .comments { border: 1px solid #8a878a; }
.actions .share { width: 83px; background: #107c41; color: #fff; }
.share .i8 { margin-left: 7px; }
.plain { margin-left: 6px; }

.ribbon { flex: none; display: flex; min-height: 99px; margin: 0 8px; background: #fff; border-radius: 8px; box-shadow: 0 1px 2px #bbb; }
.group { display: flex; flex-direction: column; justify-content: space-between; padding: 0 0 2px 8px; background: linear-gradient(#cfcfcf, #cfcfcf) right 5px / 1px 88px no-repeat; }
.group footer { display: flex; align-items: center; height: 16px; font-size: 11px; padding-right: 3px; }
.group footer span { flex: 1; text-align: center; padding-right: 8px; }
.g-clip { width: 106px; }
.g-font { width: 236px; }
.g-align { width: 298px; }
.g-num { width: 162px; }
.g-style { width: 237px; }
.g-cells { width: 90px; }
.g-edit { width: 179px; }
.body { display: flex; padding-top: 10px; }
.body.tight { padding-top: 3px; }
.lines { display: flex; flex-direction: column; gap: 6px; }
.row { display: flex; align-items: center; height: 26px; }
.two { gap: 2px; }
.pull { margin-left: -1px; }
.stack { display: flex; flex-direction: column; }
.ib { width: 26px; height: 26px; flex: none; }
.cb { width: 13px; height: 26px; }
.sep { width: 1px; height: 24px; margin: 0 2px; background: #cfcfcf; flex: none; }
.slim { margin: 0 1px; }
.g-align { padding-left: 7px; }
.tall { height: 62px; margin: 0 7px 0 5px; }
.paste { flex-direction: column; justify-content: flex-start; width: 52px; padding-top: 5px; gap: 3px; }
.paste .i8 { margin-top: 2px; }
.g-clip .stack { margin-left: -3px; }
.combo { position: relative; height: 24px; display: flex; align-items: center; }
.combo select { appearance: none; width: 100%; height: 24px; border: 1px solid #8a8a8a; border-radius: 4px; background: #fff; padding: 0 3px; }
.combo svg { position: absolute; right: 2px; top: 8px; pointer-events: none; }
.c-font { width: 123px; }
.c-size { width: 43px; }
.g-num .combo { width: 147px; height: 26px; }
.g-num .combo svg { top: 9px; }
.glyph { font-size: 14px; color: #444; }
.glyph svg { align-self: flex-start; margin-top: 5px; }
.big { font-size: 17px; }
.bold { font-weight: 700; }
.ital { font-style: italic; }
.under span { border-bottom: 1px solid #333; line-height: 14px; padding: 0 1px; }
.fc span { border-bottom: 4px solid #c3141c; line-height: 14px; padding: 0 3px; }
.pressed { border: 1px solid #777; border-radius: 4px; background: #e9e8e9; }
.tb { height: 26px; gap: 3px; justify-content: flex-start; white-space: nowrap; }
.far { margin-left: 5px; }
.dec { display: grid; grid-template-columns: 8px 8px; font-size: 9px; line-height: 9px; align-content: center; gap: 0 1px; }
.dec .span { grid-column: 1 / 3; text-align: right; }
.lb { flex-direction: column; justify-content: flex-start; padding-top: 4px; white-space: nowrap; }
.lb span { display: flex; align-items: center; gap: 1px; }
.lb .i32 { margin-bottom: 2px; }
.larges { justify-content: space-between; padding: 0 9px 0 2px; }
.g-edit .body { justify-content: space-between; padding-right: 11px; }
.g-cells { padding-left: 12px; }
.g-edit .stack { margin-left: -1px; }
.g-edit .stack .ib { width: 28px; }
.g-edit .row .cb { width: 10px; }
.collapse { margin: auto 6px 4px auto; padding: 3px; }

.formula { flex: none; display: flex; align-items: center; margin: 8px 8px 7px; height: 25px; }
.namebox, .fxbox, .bar { display: flex; align-items: center; height: 25px; background: #fff; border: 1px solid #d6d6d6; border-radius: 4px; }
.namebox { width: 266px; padding: 0 4px 0 6px; font: 14px/20px Roboto, sans-serif; }
.dots3 { width: 4px; height: 12px; fill: #333; stroke: none; margin: 0 8px; }
.fxbox { width: 75px; justify-content: space-around; }
.off { color: #b5b5b5; }
.formula .fx { font: italic 18px/20px "Liberation Serif", serif; color: #333; }
.bar { flex: 1; margin-left: 3px; padding: 0 3px 0 8px; }

.sheet { flex: 1; min-height: 0; display: flex; }
.pane { flex: 1; min-width: 0; overflow: hidden; background: #fff; }
.grid { table-layout: fixed; border-collapse: separate; border-spacing: 0; width: 1372px; font: 13px/18px Lato, sans-serif; font-variant-ligatures: none; }
.grid th, .grid td { height: 20px; padding: 0 2px; border-right: 1px solid #d9d9d9; border-bottom: 1px solid #d9d9d9; text-align: left; white-space: nowrap; color: #111; font-weight: 400; }
.grid th { background: #f0eff0; text-align: center; border-color: #a6a6a6; padding: 1px 0 0; line-height: 18px; font-family: Roboto, sans-serif; color: #262626; }
.grid thead th { border-right-color: #c4c4c4; }
.grid tbody th { border-bottom-color: #c4c4c4; }
.corner svg { display: block; margin-left: 9px; fill: #b3b3b3; stroke: none; width: 13px; height: 13px; }
.grid th.sel { background: #d3d3d3; color: #1d6340; border-bottom-color: #107c41; border-right-color: #107c41; }
.grid td.t1, .grid td.b1 { border-color: #8ea3d3; }
.grid td.t2, .grid td.b2 { border-color: #a3c490; }
.grid td.b1, .grid td.b2 { border-bottom-color: #d9d9d9; }
.grid td.head { color: #fff; font-weight: 700; }
.t1.head { background: #4472c4; }
.t2.head { background: #70ad47; }
.t1.band { background: #d9e1f2; }
.t2.band { background: #e2efda; }
.grid td.end { position: relative; }
.end::after { content: ""; position: absolute; right: 0; bottom: 0; border: 2px solid; border-color: transparent #3f51a3 #3f51a3 transparent; }
.t2.end::after { border-color: transparent #555 #555 transparent; }
.grid td.active { position: relative; overflow: visible; }
.active::before { content: ""; position: absolute; inset: -2px; border: 2px solid #217346; }
.active::after { content: ""; position: absolute; right: -3px; bottom: -3px; width: 6px; height: 6px; background: #217346; border: 1px solid #fff; }
.vscroll { width: 22px; display: flex; flex-direction: column; align-items: center; gap: 2px; padding: 4px 0 1px; }
.vscroll svg, .arr { fill: #6b6b6b; stroke: none; }
.thumb { background: #6f6f6f; border-radius: 5px; }
.vscroll .thumb { width: 9px; flex: 1; margin-bottom: 23px; }

.sheettabs { flex: none; height: 33px; display: flex; align-items: center; padding: 0 22px 2px 16px; border-bottom: 1px solid #bfc4bd; background: #efeff0; }
.step { width: 32px; color: #8c8c8c; }
.sheettab { width: 56px; height: 27px; align-self: flex-start; margin-left: 36px; background: #fff; border-radius: 0 0 4px 4px; font-weight: 600; font-size: 13px; }
.sheettab span { border-bottom: 2px solid #1d6340; line-height: 20px; }
.sheettabs > .sep { margin: 0 41px 0 5px; }
.hscroll { display: flex; align-items: center; margin-left: auto; width: 48%; max-width: 532px; }
.hscroll .thumb { flex: 1; height: 9px; margin: 0 28px 0 4px; }
.hscroll .dots3 { margin: 0 18px 0 8px; }

.status { flex: none; height: 21px; display: flex; align-items: center; background: #f5f5f5; font-size: 11px; padding: 0 8px 0 7px; }
.ready { width: 45px; }
.access { margin-left: 16px; gap: 3px; white-space: nowrap; }
.status .access { font-weight: 600; }
.views { display: flex; margin-left: auto; }
.views button { width: 40px; height: 21px; }
.views .on { background: #dedede; }
.zb { margin-left: 6px; }
.zoom { appearance: none; width: 100px; height: 12px; margin: 0 0 0 5px; background: linear-gradient(#666, #666) center / 100% 1px no-repeat; }
.zoom::-webkit-slider-thumb { appearance: none; width: 5px; height: 12px; background: #555; }
.zoom + .zb { margin-left: 5px; }
.pct { margin-left: 12px; }

.taskbar { position: relative; flex: none; height: 40px; display: flex; color: #eef3f6; background: linear-gradient(90deg, #1d3440, #25383e 30%, #1f3345 45%, #1e3138 65%, #1d2c3c 80%, #1b2547); font-size: 13px; }
.start { width: 48px; color: #fff; }
.tsearch { width: 288px; display: flex; align-items: center; gap: 11px; padding-left: 10px; background: #f2f3f2; color: #222; border: 1px solid #c6c8c8; font-size: 14px; }
.tsearch input { width: 60px; }
.scene { width: 80px; height: 38px; stroke: none; }
.apps { display: flex; margin-left: 2px; }
.apps button { width: 49px; height: 40px; border-bottom: 2px solid transparent; }
.apps svg, .weather svg { stroke: none; }
.apps .cur { background: #4a5a61; border-color: #7fb1e0; }
.apps .open { width: 41px; margin: 0 4px; border-color: #7fb1e0; }
.weather { display: flex; align-items: center; gap: 8px; margin-left: auto; white-space: nowrap; }
.tray { display: flex; align-items: center; gap: 8px; margin-left: 42px; padding-right: 24px; }
.clock { display: flex; flex-direction: column; align-items: center; justify-content: space-between; height: 37px; width: 68px; font-size: 12px; }
.wm { position: absolute; right: 0; bottom: 0; display: flex; align-items: flex-end; font: 300 30px/28px Lato, sans-serif; color: #fff; }
.wmx { width: 34px; height: 28px; }
.w1 { line-height: 28px; }
.w2 { color: #4bae46; font-weight: 700; margin-left: -6px; }
```
FILE: script.js
```js
const widths = [26, 64, 64, 246, 67, 137, 64, 64, 64, 64, 64, 64, 64, 64, 64, 64, 64, 64];
const letters = "ABCDEFGHIJKLMNOPQ".split("");
const colC = ["İSİMLER", "Nurgül GÖMRE", "Nihal DOKER", "Nihal TIRNAKÇI", "Enver PELİNDAĞ", "Rümeysa TANKIR",
  "Ekrem Kamil ŞİŞEK", "", "Polat AYNAOĞLU", "Kezban Aysun AZAKLIOĞLU", "Gökçe Sude MITICA", "", "Yaşar GÖKÇINAR",
  "Aras Şenol DAVAZLI", "Erdoğan Ersin GÜNELİ", "Pelin SOYTORUN", "Ceylin BEBEK", "Birol Halit ERDİRİK",
  "Celal KARAGOZOĞLU", "\u00a0Metin ADİLOGLU"];
const colE = ["İSİMLER", "Nurgül GÖMRE", "Nihal DOKER", "Nihal TIRNAKÇI", "Enver PELİNDAĞ", "Rümeysa TANKIR",
  "Polat AYNAOĞLU", "Yaşar GÖKÇINAR", "Pelin SOYTORUN", "Ceylin BEBEK", "Celal KARAGOZOĞLU"];

// Builds one cell; "b1" and "b2" cells carry the left edge line of a list.
function cell(letter, r) {
  const lists = { C: [colC, "t1"], E: [colE, "t2"] };
  if (lists[letter] && r <= lists[letter][0].length) {
    const [list, name] = lists[letter];
    const cls = [name];
    if (r === 1) cls.push("head");
    else if (r % 2 === 0) cls.push("band");
    if (r === list.length) cls.push("end");
    return `<td class="${cls.join(" ")}">${list[r - 1]}</td>`;
  }
  if (letter === "B" && r <= colC.length) return '<td class="b1"></td>';
  if (letter === "D" && r <= colE.length) return '<td class="b2"></td>';
  if (letter === "J" && r === 19) return '<td class="active"></td>';
  return "<td></td>";
}

let html = "<colgroup>" + widths.map(w => `<col style="width:${w}px">`).join("") + "</colgroup>";
html += '<thead><tr><th class="corner"><svg viewBox="0 0 12 12"><path d="M12 0v12H0z"/></svg></th>';
html += letters.map(l => `<th${l === "J" ? ' class="sel"' : ""}>${l}</th>`).join("") + "</tr></thead><tbody>";
for (let r = 1; r <= 22; r++) {
  html += `<tr><th${r === 19 ? ' class="sel"' : ""}>${r}</th>` + letters.map(l => cell(l, r)).join("") + "</tr>";
}
document.getElementById("grid").innerHTML = html + "</tbody>";
```
